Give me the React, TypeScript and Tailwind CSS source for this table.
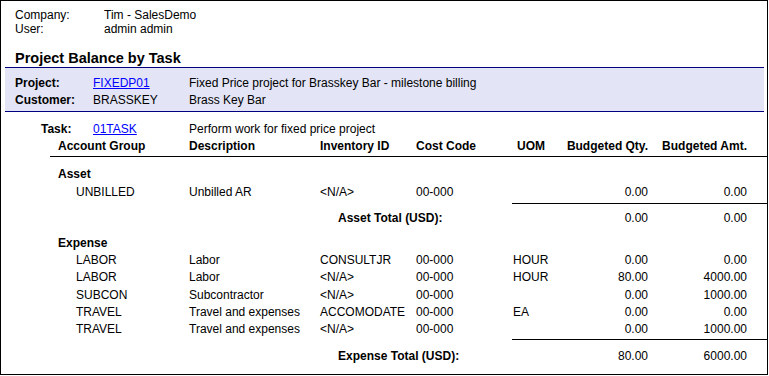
import React from "react";

const GRID = "grid grid-cols-[131px_131px_96px_97px_40px_95px_99px]";

type Row = { g: string; d: string; inv: string; cc: string; uom: string; q: string; a: string };

const expense: Row[] = [
  { g: "LABOR", d: "Labor", inv: "CONSULTJR", cc: "00-000", uom: "HOUR", q: "0.00", a: "0.00" },
  { g: "LABOR", d: "Labor", inv: "<N/A>", cc: "00-000", uom: "HOUR", q: "80.00", a: "4000.00" },
  { g: "SUBCON", d: "Subcontractor", inv: "<N/A>", cc: "00-000", uom: "", q: "0.00", a: "1000.00" },
  { g: "TRAVEL", d: "Travel and expenses", inv: "ACCOMODATE", cc: "00-000", uom: "EA", q: "0.00", a: "0.00" },
  { g: "TRAVEL", d: "Travel and expenses", inv: "<N/A>", cc: "00-000", uom: "", q: "0.00", a: "1000.00" },
];

function DataRow({ r, lh }: { r: Row; lh: string }) {
  return (
    <div className={`${GRID} ${lh} whitespace-nowrap`}>
      <div className="pl-[18px]">{r.g}</div>
      <div>{r.d}</div>
      <div>{r.inv}</div>
      <div>{r.cc}</div>
      <div>{r.uom}</div>
      <div className="text-right">{r.q}</div>
      <div className="text-right">{r.a}</div>
    </div>
  );
}

function TotalRow({ label, q, a }: { label: string; q: string; a: string }) {
  return (
    <div className="flex leading-[17px] font-bold whitespace-nowrap">
      <div className="ml-[280px] w-[175px]">{label}</div>
      <div className="w-[135px] text-right font-normal">{q}</div>
      <div className="w-[99px] text-right font-normal">{a}</div>
    </div>
  );
}

export default function App() {
  return (
    <div className="w-[768px] h-[375px] border border-black bg-white text-black text-[12px] font-['Liberation_Sans',Arial,sans-serif] overflow-hidden">
      <div className="pt-[7px] pl-[14px] leading-[14px]">
        <div className="grid grid-cols-[89px_1fr]">
          <div>Company:</div>
          <div>Tim - SalesDemo</div>
          <div>User:</div>
          <div>admin admin</div>
        </div>
      </div>
      <div className="mt-[14px] pl-[14px] text-[14.5px] leading-[17px] font-bold">Project Balance by Task</div>
      <div className="ml-[4px] mr-[3px] bg-[#e3e5f6] border-y border-[#000080] pt-[7px] pb-[2px] pl-[10px] leading-[17px]">
        <div className="grid grid-cols-[78px_96px_1fr]">
          <div className="font-bold">Project:</div>
          <div>
            <span className="text-[#0000ff] underline">FIXEDP01</span>
          </div>
          <div>Fixed Price project for Brasskey Bar - milestone billing</div>
          <div className="font-bold">Customer:</div>
          <div>BRASSKEY</div>
          <div>Brass Key Bar</div>
        </div>
      </div>
      <div className="mt-[9px] pl-[40px] leading-[17px] grid grid-cols-[52px_96px_1fr]">
        <div className="font-bold">Task:</div>
        <div>
          <span className="text-[#0000ff] underline">01TASK</span>
        </div>
        <div>Perform work for fixed price project</div>
      </div>
      <div className="ml-[49px]">
        <div className="border-b border-black pl-[8px] pb-[1px]">
          <div className={`${GRID} leading-[17px] font-bold whitespace-nowrap`}>
            <div>Account Group</div>
            <div>Description</div>
            <div>Inventory ID</div>
            <div>Cost Code</div>
            <div className="pl-[4px]">UOM</div>
            <div className="text-right">Budgeted Qty.</div>
            <div className="text-right">Budgeted Amt.</div>
          </div>
        </div>
        <div className="pl-[8px]">
          <div className="mt-[9px] leading-[17px] font-bold">Asset</div>
          <div className="mt-[1px]">
            <DataRow
              r={{ g: "UNBILLED", d: "Unbilled AR", inv: "<N/A>", cc: "00-000", uom: "", q: "0.00", a: "0.00" }}
              lh="leading-[17px]"
            />
          </div>
          <div className="mt-[2px] ml-[454px] border-t border-black" />
          <div className="mt-[6px]">
            <TotalRow label="Asset Total (USD):" q="0.00" a="0.00" />
          </div>
          <div className="mt-[8px] leading-[17px] font-bold">Expense</div>
          <div>
            {expense.map((r, i) => (
              <DataRow key={i} r={r} lh="leading-[17.3px]" />
            ))}
          </div>
          <div className="mt-[1px] ml-[454px] border-t border-black" />
          <div className="mt-[8px]">
            <TotalRow label="Expense Total (USD):" q="80.00" a="6000.00" />
          </div>
        </div>
      </div>
    </div>
  );
}
